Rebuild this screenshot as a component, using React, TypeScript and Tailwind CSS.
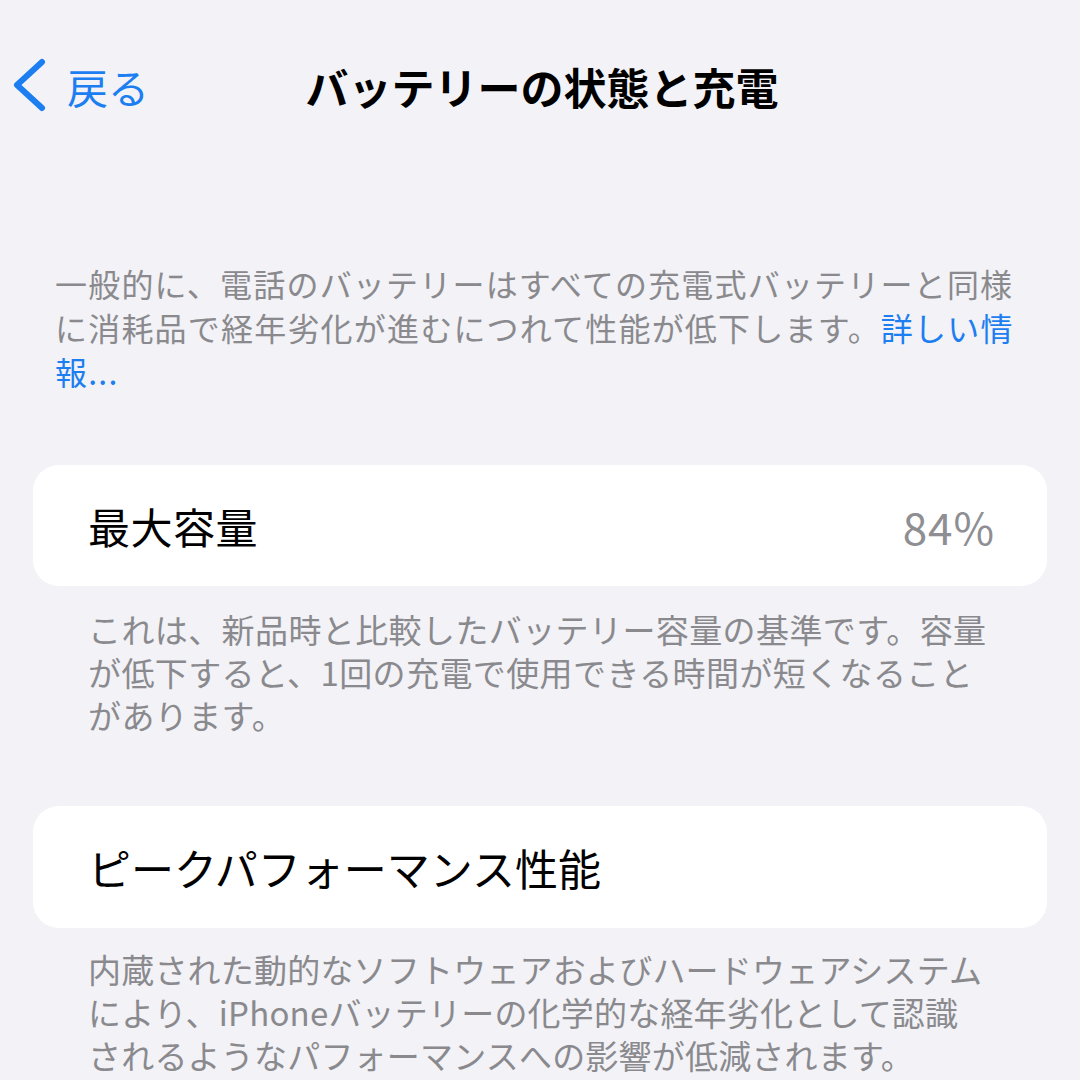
import React from "react";

const font = { fontFamily: '"Noto Sans CJK JP", "Noto Sans", sans-serif' };

export default function App() {
  return (
    <div className="w-[1080px] h-[1080px] overflow-hidden bg-[#f2f2f7]" style={font}>
      <div className="relative h-[172px] flex items-center">
        <div className="absolute left-[12px] top-[58px] flex items-center">
          <svg width="36" height="54" viewBox="0 0 36 54">
            <polyline
              points="30,4 5,27 30,50"
              fill="none"
              stroke="#1c7ef0"
              strokeWidth="6"
              strokeLinecap="round"
              strokeLinejoin="round"
            />
          </svg>
        </div>
        <div className="absolute left-[67px] top-[58px] h-[56px] flex items-center text-[41px] text-[#1c7ef0] leading-none">
          戻る
        </div>
        <div className="w-full flex justify-center pl-[4px]">
          <span className="text-[43px] font-bold text-black leading-none">バッテリーの状態と充電</span>
        </div>
      </div>

      <div className="mt-[89px] pl-[55px] text-[32px] leading-[44px] tracking-[1.2px] text-[#8a8a8e] whitespace-nowrap">
        <div>一般的に、電話のバッテリーはすべての充電式バッテリーと同様</div>
        <div>
          に消耗品で経年劣化が進むにつれて性能が低下します。<span className="text-[#1c7ef0]">詳しい情</span>
        </div>
        <div className="text-[#1c7ef0]">報...</div>
      </div>

      <div className="mt-[72px] mx-[33px] h-[121px] bg-white rounded-[26px] flex items-center justify-between pl-[55px] pr-[52px]">
        <span className="text-[42px] text-black tracking-[0.5px]">最大容量</span>
        <span className="text-[44px] text-[#8e8e93] tracking-[1px]">84%</span>
      </div>

      <div className="mt-[22px] pl-[88px] text-[33px] leading-[43px] tracking-[0.4px] text-[#8a8a8e] whitespace-nowrap">
        <div>これは、新品時と比較したバッテリー容量の基準です。容量</div>
        <div>が低下すると、1回の充電で使用できる時間が短くなること</div>
        <div>があります。</div>
      </div>

      <div className="mt-[69px] mx-[33px] h-[122px] bg-white rounded-[26px] flex items-center pl-[55px]">
        <span className="text-[43px] text-black">ピークパフォーマンス性能</span>
      </div>

      <div className="mt-[20px] pl-[88px] text-[33px] leading-[43px] tracking-[0.2px] text-[#8a8a8e] whitespace-nowrap">
        <div>内蔵された動的なソフトウェアおよびハードウェアシステム</div>
        <div>により、iPhoneバッテリーの化学的な経年劣化として認識</div>
        <div>されるようなパフォーマンスへの影響が低減されます。</div>
      </div>
    </div>
  );
}
